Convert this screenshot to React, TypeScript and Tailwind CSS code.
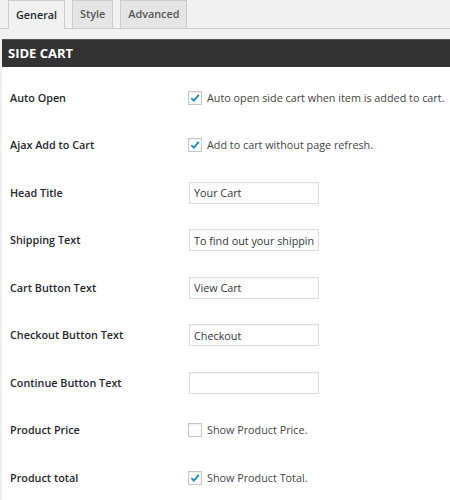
import React from "react";

type Row =
  | { label: string; kind: "check"; checked: boolean; text: string }
  | { label: string; kind: "input"; value: string };

const rows: Row[] = [
  { label: "Auto Open", kind: "check", checked: true, text: "Auto open side cart when item is added to cart." },
  { label: "Ajax Add to Cart", kind: "check", checked: true, text: "Add to cart without page refresh." },
  { label: "Head Title", kind: "input", value: "Your Cart" },
  { label: "Shipping Text", kind: "input", value: "To find out your shipping cost , Please proceed to checkout." },
  { label: "Cart Button Text", kind: "input", value: "View Cart" },
  { label: "Checkout Button Text", kind: "input", value: "Checkout" },
  { label: "Continue Button Text", kind: "input", value: "" },
  { label: "Product Price", kind: "check", checked: false, text: "Show Product Price." },
  { label: "Product total", kind: "check", checked: true, text: "Show Product Total." },
];

function Check({ checked }: { checked: boolean }) {
  return (
    <span className="flex h-[14px] w-[14px] shrink-0 items-center justify-center border border-[#c4c8cc] bg-white shadow-[inset_0_1px_2px_rgba(0,0,0,0.08)]">
      {checked && (
        <svg width="12" height="12" viewBox="0 0 12 12">
          <path d="M2.3 6.2 L4.8 8.7 L9.8 2.8" fill="none" stroke="#1e8cbe" strokeWidth="1.9" />
        </svg>
      )}
    </span>
  );
}

export default function App() {
  return (
    <div
      className="flex h-[500px] w-[450px] flex-col overflow-hidden bg-[#f1f1f1]"
      style={{ fontFamily: '"Open Sans", "Noto Sans", sans-serif' }}
    >
      <div className="flex h-[32px] items-end gap-[7px] border-b border-[#cccccc] pl-[8px]">
        <div className="-mb-px flex h-[29px] items-center border border-b-0 border-[#cccccc] bg-[#f1f1f1] px-[7px] text-[10.8px] font-semibold text-[#23282d]">
          General
        </div>
        <div className="flex h-[28px] items-center border border-b-0 border-[#cccccc] bg-[#e5e5e5] px-[7px] text-[10.8px] font-semibold text-[#555555]">
          Style
        </div>
        <div className="flex h-[28px] items-center border border-b-0 border-[#cccccc] bg-[#e5e5e5] px-[7px] text-[10.8px] font-semibold text-[#555555]">
          Advanced
        </div>
      </div>
      <div className="ml-[2px] mt-[10px] flex flex-1 flex-col">
        <div className="flex h-[28px] items-center border-t border-[#555] bg-[#333333] pl-[6px] text-[13px] font-bold text-white">
          SIDE CART
        </div>
        <div className="flex flex-1 flex-col bg-white pt-[7px]">
          {rows.map((r) => (
            <div key={r.label} className="flex h-[47.5px] shrink-0 items-center">
              <div className="w-[186px] shrink-0 pl-[8px] text-[10.8px] font-semibold text-[#23282d]">{r.label}</div>
              {r.kind === "check" ? (
                <div className="flex items-center gap-[5px] text-[10.8px] text-[#444444]">
                  <Check checked={r.checked} />
                  <span className="whitespace-nowrap">{r.text}</span>
                </div>
              ) : (
                <input
                  readOnly
                  value={r.value}
                  className="ml-[1px] h-[22px] w-[130px] border border-[#dddddd] bg-white px-[4px] text-[10.8px] text-[#32373c] shadow-[inset_0_1px_2px_rgba(0,0,0,0.05)] outline-none"
                />
              )}
            </div>
          ))}
        </div>
        <div className="flex h-[2px] shrink-0 bg-[#111111]">
          <div className="ml-[94px] w-[32px] bg-[#a00000]" />
          <div className="ml-[84px] w-[38px] bg-[#444444]" />
        </div>
      </div>
    </div>
  );
}
